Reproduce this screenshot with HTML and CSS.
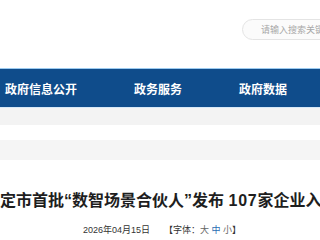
FILE: index.html
```html
<!DOCTYPE html>
<html lang="zh-CN">
<head>
<meta charset="utf-8">
<title>政府信息公开</title>
<link rel="stylesheet" href="styles.css">
</head>
<body>
<div class="page">
  <header class="header">
    <div class="search">请输入搜索关键词</div>
  </header>
  <nav class="nav">
    <span class="nav-item">政府信息公开</span>
    <span class="nav-item">政务服务</span>
    <span class="nav-item">政府数据</span>
  </nav>
  <div class="band"></div>
  <div class="spacer"></div>
  <div class="band band-2"></div>
  <div class="title-row">
    <h1 class="title">保定市首批“数智场景合伙人”发布 <span class="num">107</span>家企业入选</h1>
  </div>
  <div class="meta">
    <span class="date">2026年04月15日</span>
    <span class="size">【字体：<span class="sz">大</span> <span class="sz active">中</span> <span class="sz">小</span>】</span>
  </div>
</div>
</body>
</html>
```
FILE: styles.css
```css
html, body {
  margin: 0;
  padding: 0;
  background: #ffffff;
}
body {
  width: 320px;
  height: 240px;
  overflow: hidden;
  font-family: "Noto Sans CJK SC", "Liberation Sans", sans-serif;
}
.page {
  width: 320px;
  overflow: hidden;
}
.header {
  height: 68px;
  box-sizing: border-box;
  padding-top: 19px;
  display: flex;
  justify-content: flex-end;
  align-items: flex-start;
}
.search {
  flex: none;
  width: 110px;
  height: 21px;
  box-sizing: border-box;
  margin-right: -32px;
  border: 1px solid #e4e4e4;
  border-radius: 11px;
  background: #fbfbfb;
  padding-left: 18px;
  font-size: 9px;
  line-height: 19px;
  color: #a8a8a8;
  white-space: nowrap;
  overflow: hidden;
}
.nav {
  height: 38px;
  border-top: 1px solid #9ccbf0;
  border-bottom: 1px solid #d6e8f7;
  background: #0f4c8b;
  display: flex;
  align-items: center;
  gap: 57px;
  padding-left: 5px;
  color: #ffffff;
  font-weight: bold;
  font-size: 12px;
  white-space: nowrap;
}
.band {
  height: 17px;
  background: #f3f3f3;
}
.spacer {
  height: 15px;
}
.band-2 {
  height: 20px;
  background: #f5f5f5;
}
.title-row {
  display: flex;
  justify-content: flex-start;
  margin-top: 29px;
  overflow: hidden;
}
.title {
  flex: none;
  margin: 0 0 0 -16px;
  font-family: "Liberation Sans", "Noto Sans CJK SC", sans-serif;
  font-size: 16px;
  line-height: 24px;
  font-weight: bold;
  color: #1e1e1e;
  white-space: nowrap;
}
.num {
  letter-spacing: 0.8px;
}
.meta {
  margin-top: 10px;
  display: flex;
  justify-content: center;
  gap: 14px;
  padding-left: 4px;
  font-family: "Liberation Sans", "Noto Sans CJK SC", sans-serif;
  font-size: 9px;
  line-height: 14px;
  color: #333333;
  white-space: nowrap;
}
.sz {
  color: #666666;
}
.sz.active {
  color: #2a6db3;
}
```
